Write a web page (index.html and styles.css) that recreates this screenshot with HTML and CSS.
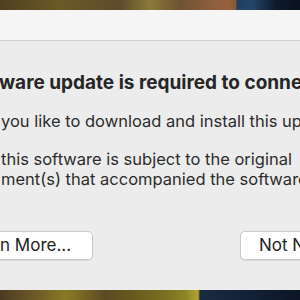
FILE: index.html
```html
<!DOCTYPE html>
<html>
<head>
<meta charset="utf-8">
<link rel="stylesheet" href="styles.css">
</head>
<body>
<div class="strip strip-top"></div>
<div class="dialog">
  <div class="titlebar"></div>
  <div class="content">
    <div class="heading">ware update is required to conne</div>
    <div class="msg">you like to download and install this up</div>
    <div class="note">
      <div class="line">this software is subject to the original</div>
      <div class="line">ment(s) that accompanied the software</div>
    </div>
    <div class="buttons">
      <div class="btn btn-left">n More...</div>
      <div class="btn btn-right">Not N</div>
    </div>
  </div>
</div>
<div class="strip strip-bottom"></div>
</body>
</html>
```
FILE: styles.css
```css
html, body {
  margin: 0;
  padding: 0;
  width: 300px;
  height: 300px;
  overflow: hidden;
  font-family: Inter, "Noto Sans", sans-serif;
}
.strip {
  height: 10px;
}
.strip-top {
  background: linear-gradient(90deg, #4f3f22 0%, #6a5a26 20%, #5e4a2c 40%, #8a7a3a 50%, #6e5232 60%, #8c5e3e 70%, #96603c 76%, #8a5a38 78.5%, #1f3f62 79%, #24466a 84%, #0f1a2a 92%, #0a1220 100%);
}
.strip-bottom {
  background: linear-gradient(90deg, #4b3a22 0%, #6e5a28 12%, #8a7a22 22%, #5c4a24 35%, #6a5a1e 45%, #7a7020 55%, #8e8428 62%, #b6a430 66%, #1a2a40 66.7%, #14233a 80%, #0c1524 100%);
}
.dialog {
  height: 280px;
  display: flex;
  flex-direction: column;
}
.titlebar {
  height: 30px;
  background: #f5f5f5;
  border-bottom: 1px solid #d2d2d2;
  flex: none;
}
.content {
  flex: 1;
  background: #ececec;
  overflow: hidden;
  color: #262626;
}
.heading, .msg, .line {
  white-space: nowrap;
}
.heading {
  font-weight: 700;
  font-size: 19px;
  line-height: 22px;
  margin-top: 31px;
  margin-left: -1px;
}
.msg {
  font-size: 16.5px;
  line-height: 20px;
  margin-top: 17px;
  margin-left: 1px;
  color: #2c2c2c;
}
.note {
  margin-top: 18px;
  margin-left: 1px;
  font-size: 16.5px;
  line-height: 20px;
  color: #2c2c2c;
}
.buttons {
  display: flex;
  justify-content: space-between;
  margin-top: 42px;
}
.btn {
  height: 27px;
  background: #fff;
  border: 1px solid #c9c9c9;
  border-radius: 5px;
  box-shadow: 0 1px 1px rgba(0,0,0,0.08);
  font-size: 17px;
  line-height: 27px;
  color: #222;
  white-space: nowrap;
  box-sizing: content-box;
}
.btn-left {
  width: 92px;
  border-left: none;
  border-radius: 0 5px 5px 0;
}
.btn-right {
  width: 41px;
  border-right: none;
  border-radius: 5px 0 0 5px;
  padding-left: 18px;
}
```
